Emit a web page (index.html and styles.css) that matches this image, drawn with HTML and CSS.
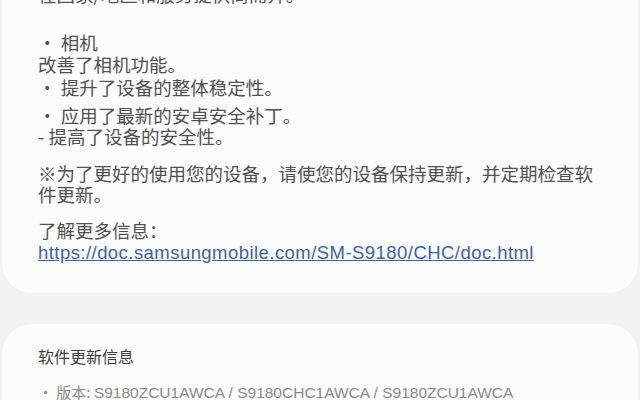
FILE: index.html
```html
<!DOCTYPE html>
<html lang="zh-CN">
<head>
    <meta charset="UTF-8">
    <meta name="viewport" content="width=device-width, initial-scale=1.0">
    <title>软件更新</title>
    <link rel="stylesheet" href="styles.css">
</head>
<body>
    <div class="page">
        <div class="card notes">
            <p class="line">在国家/地区和服务提供商而异。</p>
            <p class="line item first">・ 相机</p>
            <p class="line sub">改善了相机功能。</p>
            <p class="line item item2">・ 提升了设备的整体稳定性。</p>
            <p class="line item item3">・ 应用了最新的安卓安全补丁。</p>
            <p class="line dash">- 提高了设备的安全性。</p>
            <p class="line note">※为了更好的使用您的设备，请使您的设备保持更新，并定期检查软件更新。</p>
            <p class="line more">了解更多信息：<br><a href="#">https://doc.samsungmobile.com/SM-S9180/CHC/doc.html</a></p>
        </div>
        <div class="card info">
            <h3>软件更新信息</h3>
            <p class="version">・ 版本: <span class="code">S9180ZCU1AWCA / S9180CHC1AWCA / S9180ZCU1AWCA</span></p>
        </div>
    </div>
</body>
</html>
```

FILE: styles.css
```css
body {
    background-color: #f2f2f2;
    font-family: "Noto Sans CJK SC", "Noto Sans", sans-serif;
    margin: 0;
    padding: 0;
    overflow: hidden;
}

.page {
    margin-top: -16px;
}

.card {
    background-color: #fcfcfc;
    margin: 0 2px;
    padding: 0 40px 0 36px;
}

/* release notes */
.notes {
    border-radius: 0 0 30px 30px;
    padding-bottom: 30px;
}

.line {
    margin: 0;
    font-size: 18.5px;
    line-height: 21px;
    color: #515151;
}

.item.first {
    margin-top: 27px;
}

.sub {
    margin-top: 1px;
}

.item2 {
    margin-top: 2px;
}

.item3 {
    margin-top: 7px;
}

.note {
    margin-top: 16px;
}

.more {
    margin-top: 15px;
}

.more a {
    font-family: "Liberation Sans", Arial, sans-serif;
    letter-spacing: 0.45px;
    color: #3a62ae;
    text-decoration: underline;
}

/* software info */
.info {
    margin-top: 31px;
    border-radius: 30px 30px 0 0;
    padding-top: 22px;
    padding-bottom: 20px;
}

.info h3 {
    margin: 0;
    font-size: 16px;
    font-weight: normal;
    line-height: 21px;
    color: #3c3c3c;
}

.version {
    margin: 14px 0 0;
    font-size: 15px;
    line-height: 21px;
    color: #8a8a8a;
}

.version .code {
    font-family: "Liberation Sans", Arial, sans-serif;
    font-size: 15.5px;
}
```
